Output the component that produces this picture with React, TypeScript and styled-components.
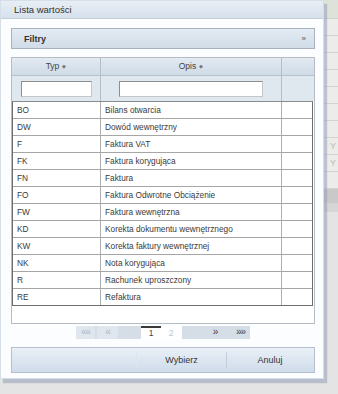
import React from 'react';
import styled, { createGlobalStyle } from 'styled-components';

const GlobalStyle = createGlobalStyle`
  html, body {
    margin: 0;
    padding: 0;
    background: #e4e4e4;
    font-family: "Liberation Sans", Arial, sans-serif;
  }
`;

const Page = styled.div`
  display: flex;
  width: 338px;
  height: 394px;
  overflow: hidden;
`;

const Dialog = styled.div`
  position: relative;
  z-index: 2;
  width: 322px;
  height: 377px;
  flex-shrink: 0;
  background: #fcfdfe;
  border: 1px solid #d6dee8;
  box-shadow: 3px 4px 1px rgba(150, 158, 185, 0.55);
  display: flex;
  flex-direction: column;
`;

const TitleBar = styled.div`
  height: 17px;
  background: linear-gradient(#e8eef5, #d6e1ec);
  border-bottom: 1px solid #c3cedb;
  font-size: 9.5px;
  color: #333;
  line-height: 17px;
  padding-left: 13px;
`;

const Body = styled.div`
  padding: 9px 8px 0 10px;
  display: flex;
  flex-direction: column;
`;

const FilterBar = styled.div`
  height: 19px;
  border: 1px solid #a9b2bc;
  background: linear-gradient(#e3ebf3, #d0dce8);
  display: flex;
  align-items: center;
  justify-content: space-between;
  padding: 0 8px 0 12px;
  font-size: 9px;
  font-weight: bold;
  color: #333;
`;

const Arrow = styled.span`
  font-size: 8px;
  color: #555;
  font-weight: normal;
`;

const GridBox = styled.div`
  margin-top: 8px;
  height: 265px;
  border: 1px solid #b6bcc4;
  background: #fff;
  display: flex;
  flex-direction: column;
`;

const HeadRow = styled.div`
  display: grid;
  grid-template-columns: 89px 181px 1fr;
  height: 17px;
  background: linear-gradient(#e2eaf2, #cfdbe7);
  border-bottom: 1px solid #b7c1cc;
`;

const HeadCell = styled.div`
  border-right: 1px solid #b4bec9;
  font-size: 8.5px;
  color: #444;
  text-align: center;
  line-height: 17px;
  &:last-child { border-right: none; }
`;

const Sort = styled.span`
  font-size: 5px;
  vertical-align: middle;
  margin-left: 3px;
  color: #777;
`;

const FilterRow = styled.div`
  display: grid;
  grid-template-columns: 89px 181px 1fr;
  height: 25px;
  background: #dfe7ef;
`;

const FilterCell = styled.div`
  border-right: 1px solid #b4bec9;
  display: flex;
  align-items: center;
  justify-content: center;
  &:last-child { border-right: none; }
`;

const FilterInput = styled.input<{ $w: number }>`
  box-sizing: border-box;
  width: ${p => p.$w}px;
  height: 16px;
  border: 1px solid #8d8d8d;
  border-right-color: #c6c6c6;
  border-bottom-color: #c6c6c6;
  background: #fff;
  padding: 0;
`;

const DataTable = styled.div`
  margin: 0 1px 0 0;
  border: 1px solid #6e6e6e;
  border-top: 1px solid #8a8a8a;
`;

const DataRow = styled.div`
  display: grid;
  grid-template-columns: 88px 181px 1fr;
  height: 16px;
  border-bottom: 1px solid #a6a6a6;
  &:last-child { border-bottom: none; }
`;

const DataCell = styled.div`
  border-right: 1px solid #b0b0b0;
  font-size: 8.3px;
  color: #3a3a3a;
  line-height: 16px;
  padding-left: 4px;
  white-space: nowrap;
  overflow: hidden;
  &:last-child { border-right: none; }
`;

const PagerWrap = styled.div`
  display: flex;
  justify-content: center;
  margin-top: 2px;
`;

const Pager = styled.div`
  display: flex;
  align-items: stretch;
  height: 13px;
  background: #d5dde7;
  gap: 2px;
`;

const PageBtn = styled.div<{ $w: number; $off?: boolean; $flat?: boolean }>`
  width: ${p => p.$w}px;
  background: ${p => (p.$off ? '#dfe6ee' : 'transparent')};
  color: ${p => (p.$off ? '#a9b9cc' : '#444')};
  font-size: 10px;
  text-align: center;
  line-height: 12px;
  letter-spacing: -1px;
`;

const PageBox = styled.div`
  width: 41px;
  background: #fff;
  display: flex;
  font-size: 8.5px;
  color: #444;
`;

const PageNum = styled.span<{ $cur?: boolean }>`
  width: 20px;
  text-align: center;
  border-top: 2px solid ${p => (p.$cur ? '#3a3a3a' : 'transparent')};
  color: ${p => (p.$cur ? '#444' : '#b8c3d0')};
  line-height: 11px;
`;

const ButtonBar = styled.div`
  margin-top: 8px;
  height: 24px;
  border: 1px solid #b5c0cc;
  background: linear-gradient(#e9f0f7, #cfdcea);
  display: grid;
  grid-template-columns: 125px 90px 1fr;
`;

const Btn = styled.div<{ $sep?: 'faint' | 'line' }>`
  display: flex;
  align-items: center;
  justify-content: center;
  font-size: 9px;
  color: #333;
  border-right: 1px solid ${p => (p.$sep === 'faint' ? '#dde5ee' : p.$sep === 'line' ? '#c3ceda' : 'transparent')};
  margin: 4px 0;
`;

const Side = styled.div`
  flex: 1;
  display: flex;
  flex-direction: column;
  background: #e4e4e4;
`;

const SideTop = styled.div`
  height: 18px;
  background: #dde3d8;
  border-bottom: 1px solid #cfd3cc;
`;

const SideRow = styled.div`
  height: 16px;
  background: #ecedea;
  border-bottom: 1px solid #d2d4d0;
  font-size: 9px;
  color: #b8bab6;
  line-height: 16px;
  padding-left: 6px;
`;

const SideDark = styled.div`
  height: 14px;
  background: #c9c9c9;
`;

const SideLight = styled.div`
  height: 9px;
  background: #d6d6d6;
`;

const rows: [string, string][] = [
  ['BO', 'Bilans otwarcia'],
  ['DW', 'Dowód wewnętrzny'],
  ['F', 'Faktura VAT'],
  ['FK', 'Faktura korygująca'],
  ['FN', 'Faktura'],
  ['FO', 'Faktura Odwrotne Obciążenie'],
  ['FW', 'Faktura wewnętrzna'],
  ['KD', 'Korekta dokumentu wewnętrznego'],
  ['KW', 'Korekta faktury wewnętrznej'],
  ['NK', 'Nota korygująca'],
  ['R', 'Rachunek uproszczony'],
  ['RE', 'Refaktura'],
];

const sideRows = ['', '', '', '', '', '', '', 'Y', 'Y', ''];

export default function App() {
  return (
    <>
      <GlobalStyle />
      <Page>
        <Dialog>
          <TitleBar>Lista wartości</TitleBar>
          <Body>
            <FilterBar>
              <span>Filtry</span>
              <Arrow>»</Arrow>
            </FilterBar>
            <GridBox>
              <HeadRow>
                <HeadCell>Typ<Sort>◆</Sort></HeadCell>
                <HeadCell>Opis<Sort>◆</Sort></HeadCell>
                <HeadCell />
              </HeadRow>
              <FilterRow>
                <FilterCell><FilterInput $w={71} /></FilterCell>
                <FilterCell><FilterInput $w={144} /></FilterCell>
                <FilterCell />
              </FilterRow>
              <DataTable>
                {rows.map(([k, v]) => (
                  <DataRow key={k}>
                    <DataCell>{k}</DataCell>
                    <DataCell>{v}</DataCell>
                    <DataCell />
                  </DataRow>
                ))}
              </DataTable>
            </GridBox>
            <PagerWrap>
              <Pager>
                <PageBtn $w={19} $off>««</PageBtn>
                <PageBtn $w={21} $off>«</PageBtn>
                <PageBtn $w={19} $flat />
                <PageBox>
                  <PageNum $cur>1</PageNum>
                  <PageNum>2</PageNum>
                </PageBox>
                <PageBtn $w={21} $flat />
                <PageBtn $w={16}>»</PageBtn>
                <PageBtn $w={4} $flat />
                <PageBtn $w={19}>»»</PageBtn>
              </Pager>
            </PagerWrap>
            <ButtonBar>
              <Btn $sep="faint" />
              <Btn $sep="line">Wybierz</Btn>
              <Btn>Anuluj</Btn>
            </ButtonBar>
          </Body>
        </Dialog>
        <Side>
          <SideTop />
          {sideRows.map((t, i) => (
            <SideRow key={i}>{t}</SideRow>
          ))}
          <SideDark />
          <SideLight />
        </Side>
      </Page>
    </>
  );
}
